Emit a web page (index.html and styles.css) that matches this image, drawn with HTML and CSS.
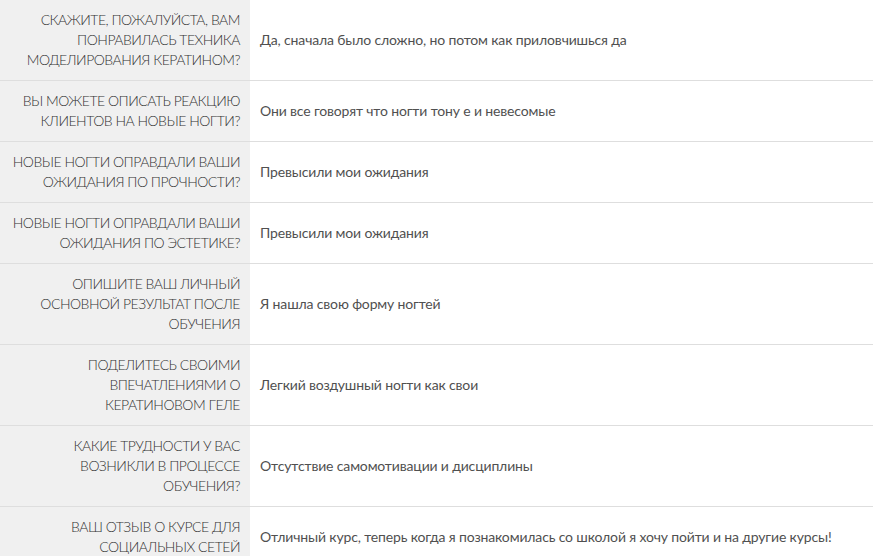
FILE: index.html
```html
<!DOCTYPE html>
<html lang="ru">
<head>
    <meta charset="UTF-8">
    <meta name="viewport" content="width=device-width, initial-scale=1.0">
    <title>Отзыв о курсе</title>
    <link rel="stylesheet" href="styles.css">
</head>
<body>
    <table class="answers">
        <tr>
            <th>Скажите, пожалуйста, вам понравилась техника моделирования кератином?</th>
            <td>Да, сначала было сложно, но потом как приловчишься да</td>
        </tr>
        <tr>
            <th>Вы можете описать реакцию клиентов на новые ногти?</th>
            <td>Они все говорят что ногти тону е и невесомые</td>
        </tr>
        <tr>
            <th>Новые ногти оправдали ваши ожидания по прочности?</th>
            <td>Превысили мои ожидания</td>
        </tr>
        <tr>
            <th>Новые ногти оправдали ваши ожидания по эстетике?</th>
            <td>Превысили мои ожидания</td>
        </tr>
        <tr>
            <th>Опишите ваш личный основной результат после обучения</th>
            <td>Я нашла свою форму ногтей</td>
        </tr>
        <tr>
            <th>Поделитесь своими впечатлениями о кератиновом геле</th>
            <td>Легкий воздушный ногти как свои</td>
        </tr>
        <tr>
            <th>Какие трудности у вас возникли в процессе обучения?</th>
            <td>Отсутствие самомотивации и дисциплины</td>
        </tr>
        <tr>
            <th>Ваш отзыв о курсе для социальных сетей</th>
            <td>Отличный курс, теперь когда я познакомилась со школой я хочу пойти и на другие курсы!</td>
        </tr>
    </table>
</body>
</html>
```

FILE: styles.css
```css
body {
    margin: 0;
    padding: 0;
    background: #fff;
    font-family: 'Lato', sans-serif;
    font-size: 14px;
    line-height: 20px;
}

.answers {
    width: 100%;
    border-collapse: collapse;
}

.answers tr {
    border-bottom: 1px solid #dedede;
}

.answers th {
    width: 230px;
    padding: 10px 10px;
    background: #f0f0f0;
    color: #333;
    font-weight: 300;
    letter-spacing: -0.5px;
    text-align: right;
    text-transform: uppercase;
    vertical-align: middle;
}

.answers td {
    padding: 10px 10px;
    color: #505050;
    letter-spacing: -0.15px;
    text-align: left;
    vertical-align: middle;
}
```
